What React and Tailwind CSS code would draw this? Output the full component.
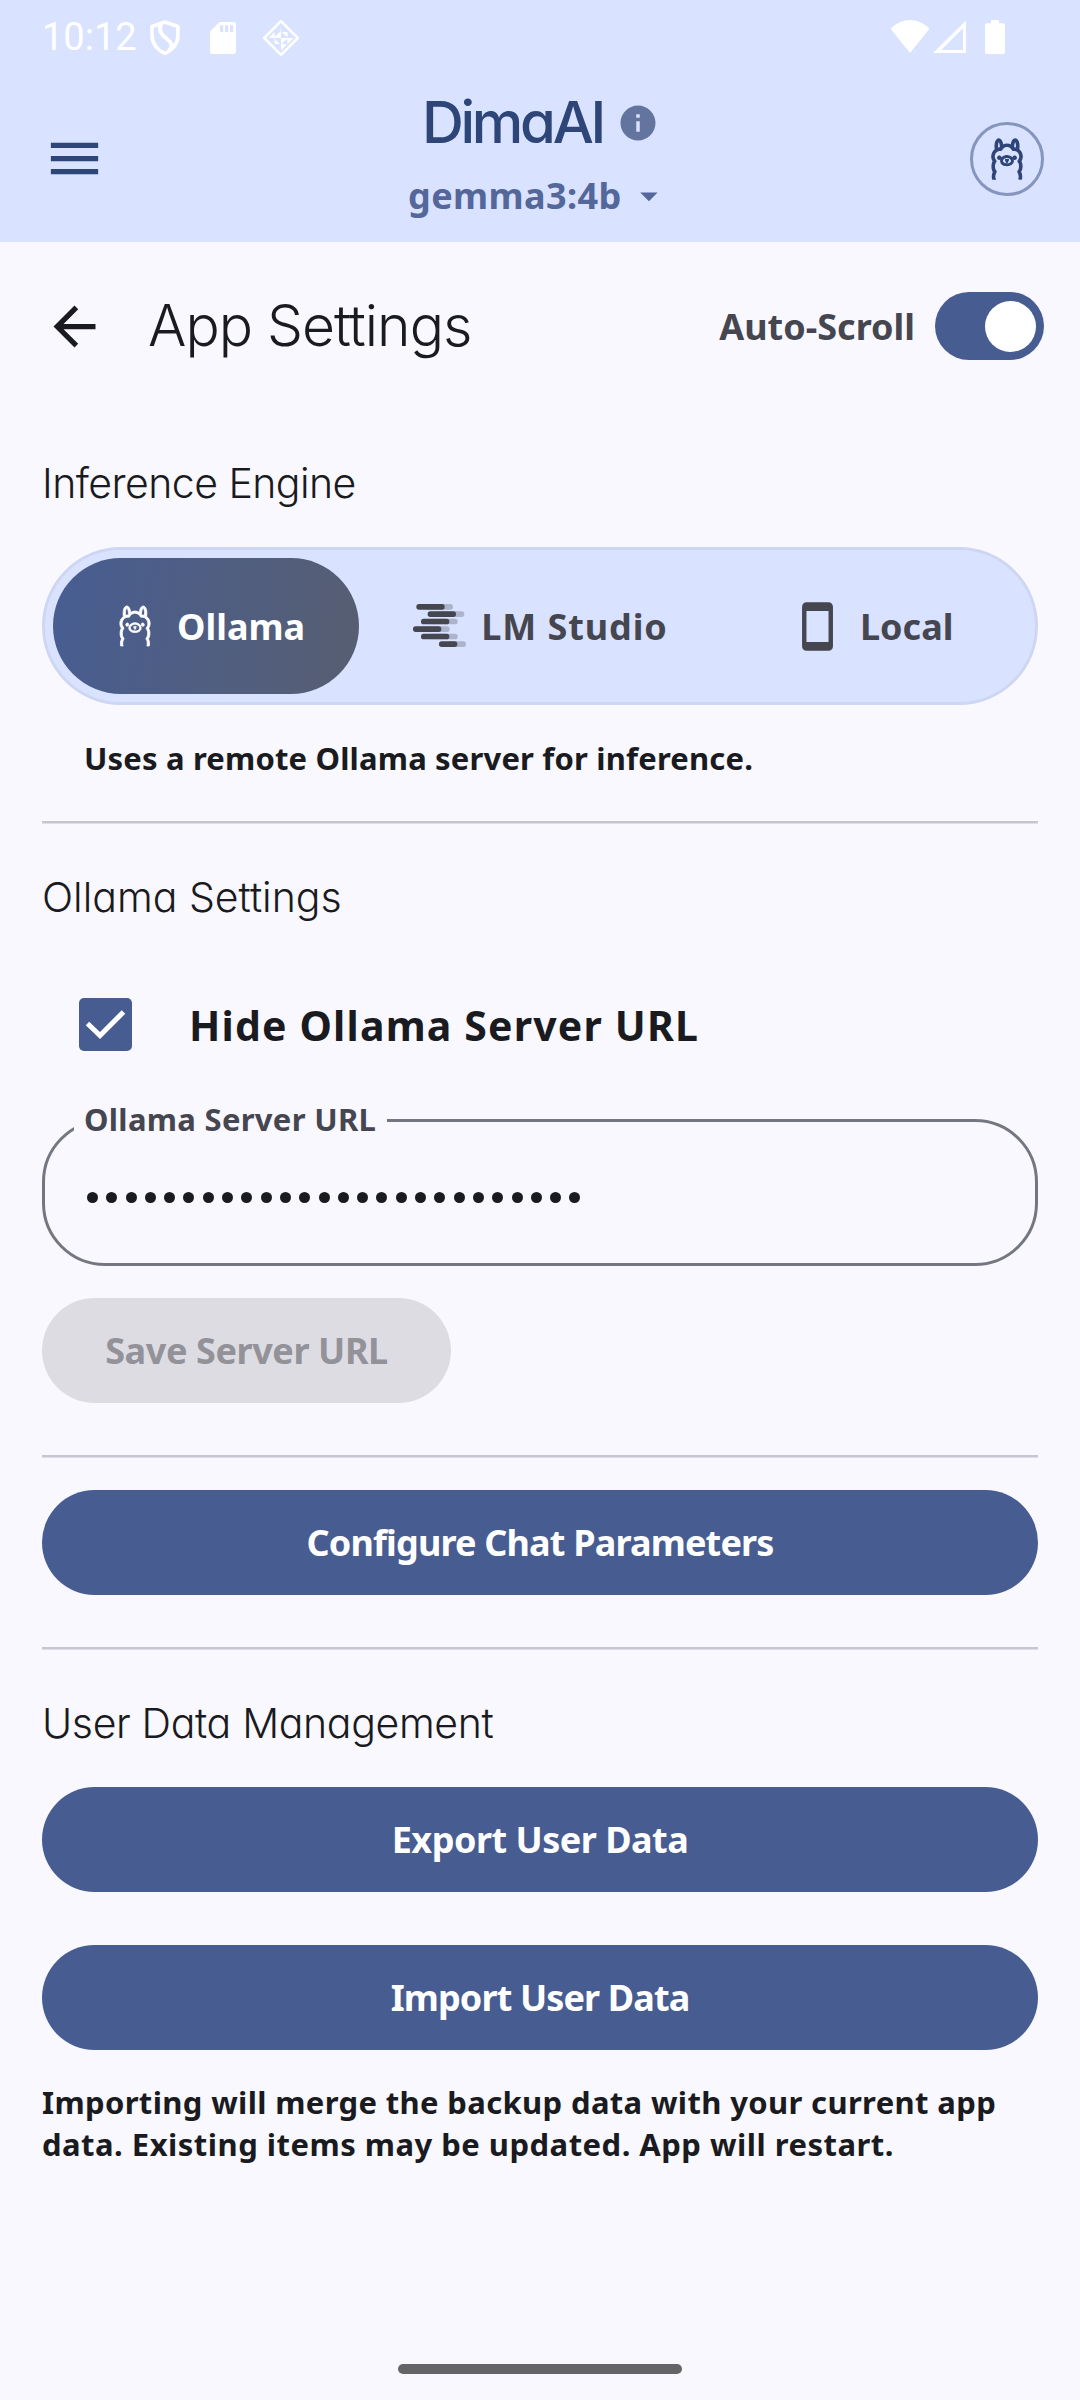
import React from "react";
import { SiOllama } from "react-icons/si";
import {
  MdMenu,
  MdInfo,
  MdArrowDropDown,
  MdArrowBack,
  MdStayCurrentPortrait,
} from "react-icons/md";

function ShieldIcon() {
  return (
    <svg width="30" height="36" viewBox="0 0 30 36" fill="none" stroke="#fff" strokeWidth="3.6" strokeLinejoin="round">
      <path d="M15 2 L28 6.500 V15 C28 24 22 30 15 33.500 C8 30 2 24 2 15 V6.500 Z" />
      <path d="M11 4 C8 11 12 15 17 19 C22 23 23 26 19 31" strokeWidth="4" />
    </svg>
  );
}

function SdCardIcon() {
  return (
    <svg width="26" height="32" viewBox="0 0 26 32" fill="none">
      <path d="M9.500 0 H23.500 A2.500 2.500 0 0 1 26 2.500 V29.500 A2.500 2.500 0 0 1 23.500 32 H2.500 A2.500 2.500 0 0 1 0 29.500 V9.500 Z" fill="#fff" />
      <path d="M10 3.200 h3.200 v6.800 h-3.200 z M15 3.200 h3.200 v6.800 h-3.200 z M20 3.200 h3.200 v6.800 h-3.200 z" fill="#D9E2FF" />
    </svg>
  );
}

function DiamondIcon() {
  return (
    <svg width="38" height="38" viewBox="0 0 38 38" fill="none">
      <path d="M19 2.200 L35.800 19 L19 35.800 L2.200 19 Z" stroke="#fff" strokeWidth="2.600" strokeLinejoin="round" />
      <g fill="#fff">
        <path d="M19 6.500 V12.500 L13 12.500 H19 V19 H6.500 L12.700 12.900 V18 L18.500 12.500 Z" />
        <path d="M19.500 13 H25.500 V18.300 Z" />
        <path d="M19 19 H31.500 L25.300 25.200 V20 L19.500 25 L25 25 L19 31.500 Z" />
        <path d="M12.500 19.500 V25 H18 Z" />
      </g>
    </svg>
  );
}

function WifiIcon() {
  return (
    <svg width="40" height="33" viewBox="0 0 40 33">
      <path d="M20 33 L0.500 8.700 C12 -2.900 28 -2.900 39.500 8.700 Z" fill="#fff" />
    </svg>
  );
}

function SignalIcon() {
  return (
    <svg width="33" height="33" viewBox="0 0 33 33">
      <path fillRule="evenodd" d="M33 0.500 V33 H0 Z M30 8.200 L8.200 30 H30 Z" fill="#fff" />
    </svg>
  );
}

function BatteryIcon() {
  return (
    <svg width="20" height="34" viewBox="0 0 20 34">
      <path d="M6 0 H14 V3.300 H18 A2 2 0 0 1 20 5.300 V32 A2 2 0 0 1 18 34 H2 A2 2 0 0 1 0 32 V5.300 A2 2 0 0 1 2 3.300 H6 Z" fill="#fff" />
    </svg>
  );
}

const lmBars = [
  [10, 0, 85, 110],
  [44, 22, 85, 110],
  [24, 44, 85, 110],
  [0, 67, 85, 110],
  [24, 89, 85, 110],
  [78, 112, 55, 81],
];

function LmStudioIcon() {
  return (
    <svg width="53.300" height="43.300" viewBox="0 0 160 130" fill="#45464F">
      {lmBars.map(([x, y, w, full]) => (
        <g key={y}>
          <rect x={x + 25} y={y} width={full - 25} height="17" rx="8" opacity="0.300" />
          <rect x={x} y={y} width={w} height="17" rx="8" />
        </g>
      ))}
    </svg>
  );
}

function SectionTitle({ children, className }) {
  return (
    <h2 className={`h-[60px] whitespace-nowrap font-['Inter',sans-serif] text-[41px] leading-[60px] font-light [font-feature-settings:'cv11'] ${className}`}>
      {children}
    </h2>
  );
}

function Divider({ className }) {
  return <div className={`h-[3px] border-b border-[#DEDEE7] bg-[#C6C6D0] ${className}`} />;
}

function PrimaryButton({ children, className }) {
  return (
    <button className={`flex h-[105px] w-full items-center justify-center rounded-full bg-[#475D92] text-[36px] leading-[50px] whitespace-nowrap text-white ${className}`}>
      {children}
    </button>
  );
}

export default function App() {
  return (
    <div className="flex h-[2400px] w-[1080px] flex-col overflow-hidden bg-[#F9F8FF] font-['Noto_Sans',sans-serif] font-bold text-[#1A1B20]">
      <header className="h-[242px] bg-[#D9E2FF] text-[#2E4578]">
        <div className="flex h-[75px] items-start text-white">
          <span className="ml-[42px] mt-[17px] w-[94px] font-['Roboto',sans-serif] text-[38px] leading-[40px] font-normal">10:12</span>
          <div className="mt-[20px] ml-[14px]"><ShieldIcon /></div>
          <div className="mt-[22px] ml-[30px]"><SdCardIcon /></div>
          <div className="mt-[19px] ml-[26px]"><DiamondIcon /></div>
          <div className="mt-[20px] ml-auto"><WifiIcon /></div>
          <div className="mt-[20px] ml-[3px]"><SignalIcon /></div>
          <div className="mt-[20px] mr-[75px] ml-[19px]"><BatteryIcon /></div>
        </div>
        <div className="flex h-[167px] items-center pr-[36px] pl-[43px]">
          <MdMenu size={63} />
          <div className="ml-[302px] flex h-full w-[262px] flex-col pt-[11px]">
            <div className="flex h-[72px] items-center pl-[14px]">
              <h1 className="w-[195px] font-['Inter',sans-serif] text-[58px] leading-[72px] font-medium tracking-[-3.3px] [font-feature-settings:'cv11']">DimaAI</h1>
              <MdInfo size={42} className="mt-[2px] text-[#63759F]" />
            </div>
            <div className="mt-[13px] flex h-[50px] items-center text-[#53679A]">
              <span className="w-[221px] text-[36px] leading-[50px] tracking-[0.4px]">gemma3:4b</span>
              <MdArrowDropDown size={42} />
            </div>
          </div>
          <div className="ml-auto flex size-[74px] items-center justify-center rounded-full border-[3px] border-[#8595BD]">
            <SiOllama size={40} strokeWidth={0.8} className="overflow-visible" />
          </div>
        </div>
      </header>

      <div className="flex h-[168px] items-center pr-[36px] pl-[43px]">
        <MdArrowBack size={63} />
        <h1 className="ml-[42px] font-['Inter',sans-serif] text-[57px] leading-[72px] font-[350] tracking-[-1px] whitespace-nowrap [font-feature-settings:'cv11']">App Settings</h1>
        <span className="mt-[2px] mr-[20px] ml-auto text-[36px] leading-[50px] text-[#45464F]">Auto-Scroll</span>
        <div className="flex h-[68px] w-[109px] items-center justify-end rounded-full bg-[#475D92] pr-[8px]">
          <div className="size-[51px] rounded-full bg-white" />
        </div>
      </div>

      <main className="flex flex-col px-[42px]">
        <SectionTitle className="mt-[43px] tracking-[-0.55px]">Inference Engine</SectionTitle>

        <div className="mt-[34px] grid h-[158px] grid-cols-3 gap-[28px] rounded-full border-[3px] border-[#CDD6F2] bg-[#D9E2FF] p-[8px] text-[36px] leading-[50px] text-[#45464F]">
          <div className="flex items-center rounded-full bg-linear-[100deg] from-[#475D92] to-[#575E71] pl-[62px] text-white">
            <SiOllama size={40} strokeWidth={0.5} className="overflow-visible" />
            <span className="mt-[2px] ml-[22px]">Ollama</span>
          </div>
          <div className="flex items-center pl-[26px]">
            <LmStudioIcon />
            <span className="mt-[2px] ml-[15px] tracking-[0.9px] whitespace-nowrap">LM Studio</span>
          </div>
          <div className="flex items-center pl-[70px]">
            <MdStayCurrentPortrait size={53} />
            <span className="mt-[2px] ml-[16px]">Local</span>
          </div>
        </div>

        <p className="mt-[32px] pl-[42px] text-[31px] leading-[42px] tracking-[0.17px]">Uses a remote Ollama server for inference.</p>
        <Divider className="mt-[42px]" />

        <SectionTitle className="mt-[43px] tracking-[0px]">Ollama Settings</SectionTitle>
        <div className="mt-[68px] flex h-[60px] items-center pl-[37px]">
          <div className="mb-[2px] flex size-[53px] items-center justify-center rounded-[5px] bg-[#475D92]">
            <svg width="53" height="53" viewBox="0 0 53 53" fill="none">
              <path d="M8.500 25.500 L21 37.500 L44.500 14" stroke="#fff" strokeWidth="5" />
            </svg>
          </div>
          <span className="ml-[57px] text-[41px] leading-[60px] tracking-[1.17px]">Hide Ollama Server URL</span>
        </div>

        <div className="relative mt-[64px] flex h-[147px] items-center rounded-[63px] border-[3px] border-[#757780]">
          <span className="absolute top-[-24px] left-[29px] w-[313px] bg-[#F9F8FF] pl-[10px] text-[31px] leading-[42px] tracking-[0.3px] text-[#45464F]">Ollama Server URL</span>
          <div className="mt-[10px] ml-[42px] flex gap-[8.300px]">
            {Array.from({ length: 26 }, (_, i) => (
              <i key={i} className="size-[11px] rounded-full bg-[#1A1B20]" />
            ))}
          </div>
        </div>

        <button className="mt-[32px] h-[105px] w-[409px] rounded-full bg-[#DDDCE3] text-[36px] leading-[50px] tracking-[-0.4px] text-[#929298]">Save Server URL</button>
        <Divider className="mt-[52px]" />
        <PrimaryButton className="mt-[32px] tracking-[-0.83px]">Configure Chat Parameters</PrimaryButton>
        <Divider className="mt-[52px]" />

        <SectionTitle className="mt-[43px] tracking-[-0.35px]">User Data Management</SectionTitle>
        <PrimaryButton className="mt-[34px] tracking-[-0.5px]">Export User Data</PrimaryButton>
        <PrimaryButton className="mt-[53px] tracking-[-0.88px]">Import User Data</PrimaryButton>

        <p className="mt-[31px] text-[31px] leading-[42px] whitespace-nowrap">
          <span className="block tracking-[0.35px]">Importing will merge the backup data with your current app</span>
          <span className="block tracking-[0.48px]">data. Existing items may be updated. App will restart.</span>
        </p>
      </main>

      <div className="mx-auto mt-auto mb-[26px] h-[10px] w-[284px] rounded-full bg-[#656567]" />
    </div>
  );
}
